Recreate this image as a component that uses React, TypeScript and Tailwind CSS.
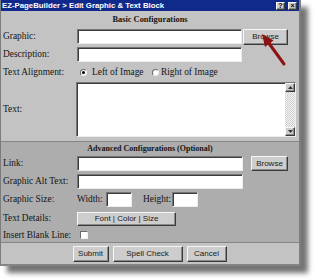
import React from 'react';

const serif = "[font-family:'Liberation_Serif','Times_New_Roman',serif]";
const sans = "[font-family:'Liberation_Sans',Arial,sans-serif]";
const inset =
  'bg-white border border-t-[#767676] border-l-[#767676] border-b-[#ededed] border-r-[#ededed] shadow-[inset_1px_1px_0_#3c3c3c]';
const raised =
  'bg-[#cdcdcd] border border-t-[#f6f6f6] border-l-[#f6f6f6] border-b-[#3a3a3a] border-r-[#3a3a3a] shadow-[inset_-1px_-1px_0_#8a8a8a]';

const Label: React.FC<{ children: React.ReactNode }> = ({ children }) => (
  <div className={`w-[76px] shrink-0 pl-[2px] text-[9.4px] leading-[15px] text-[#151515] whitespace-nowrap ${serif}`}>
    {children}
  </div>
);

const Btn: React.FC<{ w: string; h: string; children: React.ReactNode; className?: string }> = ({ w, h, children, className }) => (
  <div className={`${raised} ${w} ${h} ${className ?? ''} flex items-center justify-center text-[8px] text-[#1a1a1a] ${sans}`}>
    {children}
  </div>
);

const Radio: React.FC<{ checked?: boolean }> = ({ checked }) => (
  <div className="w-[7px] h-[7px] rounded-full bg-white border border-t-[#6a6a6a] border-l-[#6a6a6a] border-b-[#eeeeee] border-r-[#eeeeee] flex items-center justify-center">
    {checked && <div className="w-[3px] h-[3px] rounded-full bg-black" />}
  </div>
);

const Tri: React.FC<{ down?: boolean }> = ({ down }) => (
  <svg width="5" height="3" viewBox="0 0 5 3">
    <polygon points={down ? '0,0 5,0 2.5,3' : '0,3 5,3 2.5,0'} fill="#333" />
  </svg>
);

export default function App() {
  return (
    <div className="relative w-[315px] h-[279px] bg-white overflow-hidden">
      {/* Dialog window */}
      <div className="w-[301px] h-[266px] flex flex-col bg-[#c3c3c3] border-l border-l-[#7c7c7c] border-r-2 border-r-[#7e7e7e] border-b-2 border-b-[#858585] shadow-[7px_7px_5px_rgba(0,0,0,0.55)]">
        {/* Title bar */}
        <div className="h-[11px] shrink-0 bg-[#102a8c] flex items-center justify-between pl-[1px] pr-[2px]">
          <span className={`text-white font-bold text-[7.8px] leading-none whitespace-nowrap ${sans}`}>
            EZ-PageBuilder &gt; Edit Graphic &amp; Text Block
          </span>
          <div className="flex gap-[3px]">
            <div className={`${raised} w-[9px] h-[8px] flex items-center justify-center text-[7px] font-bold leading-none ${sans}`}>?</div>
            <div className={`${raised} w-[9px] h-[8px] flex items-center justify-center text-[7px] font-bold leading-none ${sans}`}>×</div>
          </div>
        </div>

        {/* Basic Configurations */}
        <div className="flex flex-col h-[130px] shrink-0">
          <div className={`h-[18px] flex items-center justify-center font-bold text-[8.4px] text-[#151515] ${serif}`}>
            Basic Configurations
          </div>
          <div className="h-[18px] flex items-start">
            <Label>Graphic:</Label>
            <div className={`${inset} w-[165px] h-[15px]`} />
            <Btn w="w-[45px]" h="h-[16px]" className="ml-[1px]">Browse</Btn>
          </div>
          <div className="h-[18px] flex items-start">
            <Label>Description:</Label>
            <div className={`${inset} w-[165px] h-[15px]`} />
          </div>
          <div className={`h-[15px] flex items-center text-[9.4px] text-[#151515] ${serif}`}>
            <Label>Text Alignment:</Label>
            <div className="w-[75px] flex items-center">
              <div className="ml-[3px]"><Radio checked /></div>
              <span className="ml-[5px] whitespace-nowrap">Left of Image</span>
            </div>
            <Radio />
            <span className="ml-[2px] whitespace-nowrap">Right of Image</span>
          </div>
          <div className="h-[59px] flex items-center">
            <Label>Text:</Label>
            <div className={`${inset} -ml-[1px] w-[220px] h-[55px] flex justify-end`}>
              <div className="w-[10px] flex flex-col">
                <div className={`${raised} h-[9px] flex items-center justify-center`}><Tri /></div>
                <div className="flex-1 [background-image:repeating-conic-gradient(#cfcfcf_0_25%,#f3f3f3_0_50%)] [background-size:2px_2px]" />
                <div className={`${raised} h-[9px] flex items-center justify-center`}><Tri down /></div>
              </div>
            </div>
          </div>
        </div>

        <div className="h-px shrink-0 bg-[#858585]" />

        {/* Advanced Configurations */}
        <div className="flex flex-col h-[100px] shrink-0 bg-[#adadad]">
          <div className={`h-[13px] flex items-center justify-center font-bold text-[8px] text-[#151515] ${serif}`}>
            Advanced Configurations (Optional)
          </div>
          <div className="h-[17px] flex items-center">
            <Label>Link:</Label>
            <div className={`${inset} w-[166px] h-[15px]`} />
            <Btn w="w-[37px]" h="h-[15px]" className="ml-[8px]">Browse</Btn>
          </div>
          <div className="h-[18px] flex items-center">
            <Label>Graphic Alt Text:</Label>
            <div className={`${inset} w-[166px] h-[15px]`} />
          </div>
          <div className={`h-[19px] flex items-center text-[9.4px] text-[#151515] ${serif}`}>
            <Label>Graphic Size:</Label>
            <span className="w-[29px]">Width:</span>
            <div className={`${inset} w-[26px] h-[15px]`} />
            <span className="ml-[11px] w-[29px]">Height:</span>
            <div className={`${inset} w-[26px] h-[15px]`} />
          </div>
          <div className="h-[19px] flex items-center">
            <Label>Text Details:</Label>
            <Btn w="w-[99px]" h="h-[14px]">Font | Color | Size</Btn>
          </div>
          <div className="h-[14px] flex items-center">
            <Label>Insert Blank Line:</Label>
            <div className="ml-[3px] w-[8px] h-[8px] bg-white border border-t-[#6a6a6a] border-l-[#6a6a6a] border-b-[#eeeeee] border-r-[#eeeeee]" />
          </div>
        </div>

        <div className="h-px shrink-0 bg-[#858585]" />

        {/* Buttons */}
        <div className="h-[21px] shrink-0 flex items-center justify-center gap-[4px] pr-[1px]">
          <Btn w="w-[36px]" h="h-[16px]">Submit</Btn>
          <Btn w="w-[70px]" h="h-[16px]">Spell Check</Btn>
          <Btn w="w-[40px]" h="h-[16px]">Cancel</Btn>
        </div>
      </div>

      {/* Red pointer arrow */}
      <svg className="absolute left-0 top-0 pointer-events-none" width="315" height="279" viewBox="0 0 315 279">
        <line x1="284" y1="64" x2="268" y2="42" stroke="#8e1212" strokeWidth="3" strokeLinecap="round" />
        <polygon points="262,34 273.5,40.5 265,47" fill="#8e1212" />
      </svg>
    </div>
  );
}
